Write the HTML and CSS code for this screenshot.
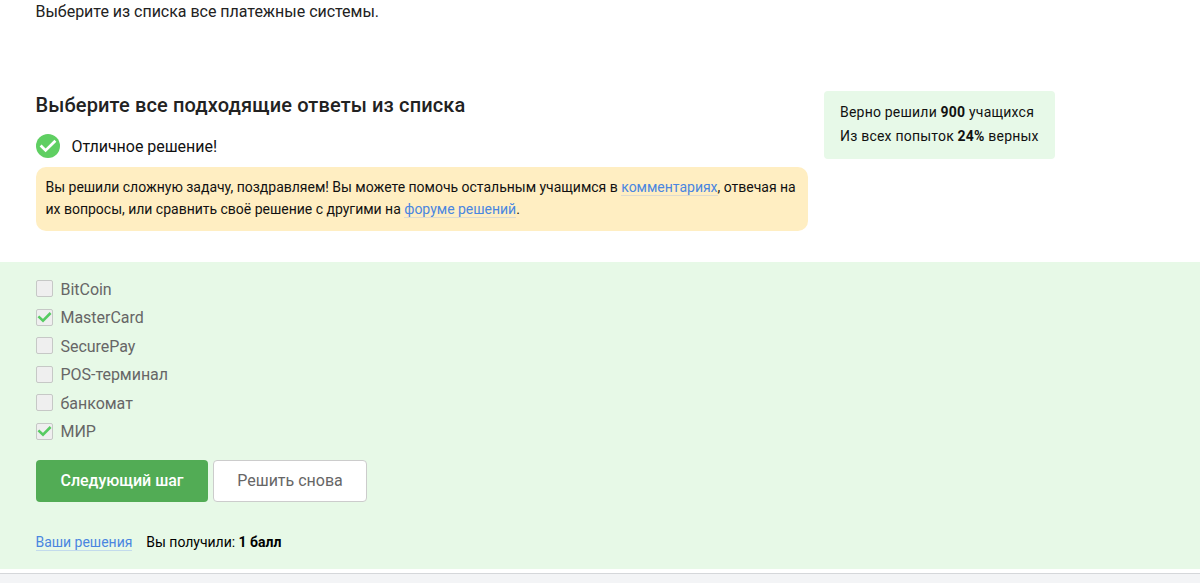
FILE: index.html
```html
<!DOCTYPE html>
<html lang="ru">
<head>
<meta charset="utf-8">
<title>Платежные системы</title>
<link rel="stylesheet" href="styles.css">
</head>
<body>
<main class="lesson">
  <p class="statement"><span>Выберите из списка все платежные системы.</span></p>
  <section class="task">
    <div class="task-main">
      <h2 class="task-title"><span>Выберите все подходящие ответы из списка</span></h2>
      <div class="verdict">
        <svg class="verdict-icon" viewBox="0 0 24 24"><circle cx="12" cy="12" r="12"/><path d="M4.6 11.6l5 4.8L19.4 6.8"/></svg>
        <span class="verdict-text">Отличное решение!</span>
      </div>
      <div class="hint">
        <div class="hint-line">Вы решили сложную задачу, поздравляем! Вы можете помочь остальным учащимся в <a class="link">комментариях</a>, отвечая на</div>
        <div class="hint-line">их вопросы, или сравнить своё решение с другими на <a class="link">форуме решений</a>.</div>
      </div>
    </div>
    <aside class="stats">
      <div>Верно решили <b>900</b> учащихся</div>
      <div>Из всех попыток <b>24%</b> верных</div>
    </aside>
  </section>
  <section class="quiz">
    <ul class="options">
      <li class="option"><span class="box"></span><span>BitCoin</span></li>
      <li class="option"><span class="box"><svg class="tick" viewBox="0 0 15 15"><path d="M1.4 6.4l4.6 4.2L13.6 3"/></svg></span><span>MasterCard</span></li>
      <li class="option"><span class="box"></span><span>SecurePay</span></li>
      <li class="option"><span class="box"></span><span>POS-терминал</span></li>
      <li class="option"><span class="box"></span><span>банкомат</span></li>
      <li class="option"><span class="box"><svg class="tick" viewBox="0 0 15 15"><path d="M1.4 6.4l4.6 4.2L13.6 3"/></svg></span><span>МИР</span></li>
    </ul>
    <div class="actions">
      <button class="btn btn-next">Следующий шаг</button>
      <button class="btn btn-retry">Решить снова</button>
    </div>
    <div class="result"><a class="link">Ваши решения</a><span>Вы получили: <b>1 балл</b></span></div>
  </section>
</main>
<footer class="footer"></footer>
</body>
</html>
```
FILE: styles.css
```css
* { box-sizing: border-box; }
body {
  margin: 0;
  height: 583px;
  overflow: hidden;
  background: #fff;
  color: #222;
  font: 16px/24px Roboto, "Liberation Sans", sans-serif;
}
b { font-weight: 700; }
.statement { margin: 0; padding-left: 35.5px; height: 91px; letter-spacing: -0.02px; }
.task { display: flex; align-items: flex-start; gap: 16px; height: 171px; padding-left: 36px; }
.task-main { width: 772px; }
.task-title { margin: 0 0 0 -0.5px; font-size: 20px; line-height: 28px; font-weight: 500; letter-spacing: 0.13px; }
.verdict { display: flex; align-items: center; gap: 11.5px; margin-top: 15px; height: 24px; color: #111; }
.verdict-icon { width: 24px; height: 24px; fill: #5fcf62; }
.verdict-icon path { fill: none; stroke: #fff; stroke-width: 2.8; }
.verdict-text { padding-top: 2px; letter-spacing: -0.03px; }
.hint { margin-top: 9px; height: 64px; padding: 9px 9.5px; border-radius: 10px; background: #ffeec2; color: #111; font-size: 14px; line-height: 22px; letter-spacing: -0.012px; white-space: nowrap; }
.link { color: #4a86e0; border-bottom: 1px solid #c3dbec; }
.hint .link { border-bottom-color: #dcdacf; }
.stats { width: 231px; height: 68px; padding: 9px 16px; border-radius: 4px; background: #e7f9e8; color: #111; font-size: 14px; line-height: 24px; letter-spacing: 0.21px; white-space: nowrap; }
.quiz { height: 307px; padding: 13px 36px 0; background: #e7f9e7; }
.options { margin: 0; padding: 0; list-style: none; }
.option { display: flex; align-items: center; gap: 7.5px; height: 28.5px; padding-top: 1px; color: #666; letter-spacing: -0.03px; }
.box { display: block; width: 17px; height: 17px; margin-top: -1.8px; border: 1px solid #c6c8c6; border-radius: 2px; background: #efefef; }
.tick { display: block; width: 15px; height: 15px; fill: none; stroke: #57cb62; stroke-width: 2.6; }
.actions { display: flex; gap: 5px; margin-top: 14px; }
.btn { height: 42px; padding: 0; border-radius: 4px; font: 16px/24px Roboto, "Liberation Sans", sans-serif; }
.btn-next { width: 172px; border: 0; background: #52ac55; color: #fff; font-weight: 500; letter-spacing: -0.05px; }
.btn-retry { width: 154px; border: 1px solid #ccc; background: #fff; color: #666; }
.result { display: flex; align-items: baseline; gap: 14px; margin: 32px 0 0 -0.5px; font-size: 14px; line-height: 16px; letter-spacing: -0.02px; color: #000; }
.footer { height: 10px; margin-top: 4px; border-top: 1px solid #d5d7da; background: #f3f4f6; }
```
